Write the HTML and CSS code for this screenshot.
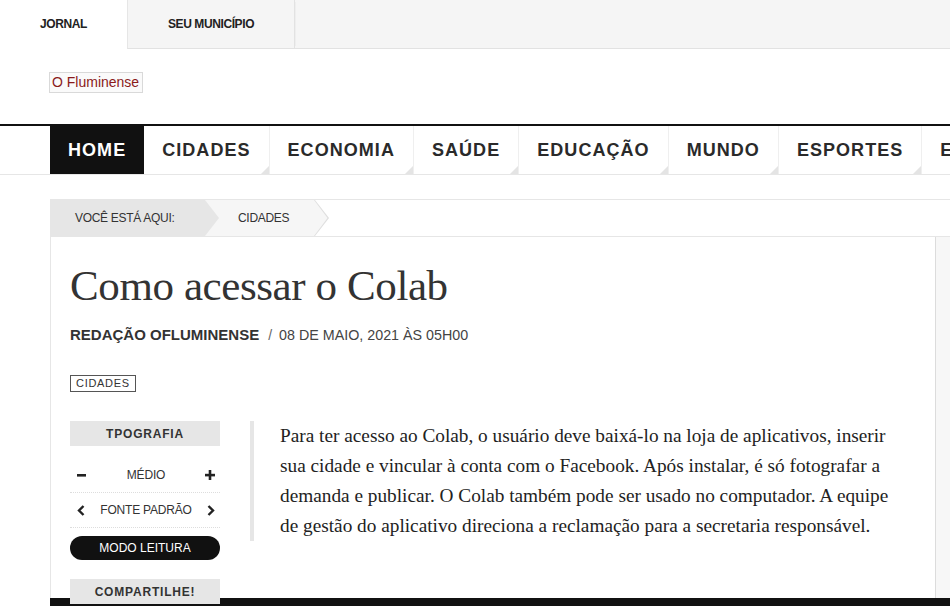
FILE: index.html
```html
<!DOCTYPE html>
<html lang="pt">
<head>
<meta charset="utf-8">
<title>Como acessar o Colab</title>
<link rel="stylesheet" href="styles.css">
</head>
<body>
<div class="topbar">
  <div class="tab tab-active">JORNAL</div>
  <div class="tabs-rest">
    <div class="tab tab-muni">SEU MUNICÍPIO</div>
  </div>
</div>
<div class="logo-row">
  <span class="logo">O Fluminense</span>
</div>
<nav class="nav">
  <a class="nav-item nav-home">HOME</a>
  <a class="nav-item">CIDADES</a>
  <a class="nav-item">ECONOMIA</a>
  <a class="nav-item">SAÚDE</a>
  <a class="nav-item">EDUCAÇÃO</a>
  <a class="nav-item">MUNDO</a>
  <a class="nav-item">ESPORTES</a>
  <a class="nav-item">ENTRETENIMENTO</a>
</nav>
<div class="page">
  <div class="crumbs">
    <div class="crumb crumb-first">VOCÊ ESTÁ AQUI:</div>
    <div class="crumb crumb-second"><span>CIDADES</span></div>
  </div>
  <div class="content-wrap">
    <article class="article">
      <h1 class="title">Como acessar o Colab</h1>
      <div class="byline"><b>REDAÇÃO OFLUMINENSE</b><span class="sep">/</span><span class="date">08 DE MAIO, 2021 ÀS 05H00</span></div>
      <div class="tags"><span class="tag">CIDADES</span></div>
      <div class="body">
        <aside class="tools">
          <div class="tool-head">TPOGRAFIA</div>
          <div class="tool-row tool-row-first">
            <svg class="ico" width="10" height="10" viewBox="0 0 10 10"><rect x="0" y="4" width="9" height="2.6" fill="#222"/></svg>
            <span>MÉDIO</span>
            <svg class="ico" width="10" height="10" viewBox="0 0 10 10"><rect x="0" y="3.8" width="10" height="2.6" fill="#222"/><rect x="3.7" y="0" width="2.6" height="10" fill="#222"/></svg>
          </div>
          <div class="tool-row">
            <svg class="ico" width="8" height="11" viewBox="0 0 8 11"><path d="M6.5 1 L2 5.5 L6.5 10" fill="none" stroke="#222" stroke-width="2.4"/></svg>
            <span>FONTE PADRÃO</span>
            <svg class="ico" width="8" height="11" viewBox="0 0 8 11"><path d="M1.5 1 L6 5.5 L1.5 10" fill="none" stroke="#222" stroke-width="2.4"/></svg>
          </div>
          <div class="read-btn">MODO LEITURA</div>
          <div class="tool-head tool-share">COMPARTILHE!</div>
        </aside>
        <blockquote class="text">
          <p>Para ter acesso ao Colab, o usuário deve baixá-lo na loja de aplicativos, inserir sua cidade e vincular à conta com o Facebook. Após instalar, é só fotografar a demanda e publicar. O Colab também pode ser usado no computador. A equipe de gestão do aplicativo direciona a reclamação para a secretaria responsável.</p>
        </blockquote>
      </div>
    </article>
    <div class="side-col"></div>
  </div>
  <div class="footer-bar"></div>
</div>
</body>
</html>
```
FILE: styles.css
```css
* { box-sizing: border-box; }
html, body { margin: 0; padding: 0; }
body {
  width: 950px;
  height: 606px;
  overflow: hidden;
  background: #fff;
  font-family: "Liberation Sans", Arial, sans-serif;
  color: #222;
}

.topbar {
  display: flex;
  height: 49px;
}
.tab {
  font-size: 12px;
  font-weight: bold;
  letter-spacing: -0.4px;
  color: #222;
  display: flex;
  align-items: center;
  justify-content: center;
  height: 48px;
}
.tab-active {
  width: 127px;
  background: #fff;
}
.tabs-rest {
  flex: 1;
  display: flex;
  background: #f5f5f5;
  border-left: 1px solid #e6e6e6;
  border-bottom: 1px solid #e2e2e2;
}
.tab-muni {
  width: 167px;
  border-right: 1px solid #e2e2e2;
  box-shadow: 3px 0 0 -2px #eee;
}

.logo-row {
  padding: 23px 0 0 49px;
  height: 75px;
}
.logo {
  display: inline-block;
  border: 1px solid #d9d9d9;
  background: #fafafa;
  color: #8b1a1a;
  font-size: 14px;
  padding: 1px 3px 2px 2px;
  line-height: 16px;
}

.nav {
  display: flex;
  border-top: 2px solid #111;
  border-bottom: 1px solid #e6e6e6;
  padding-left: 50px;
  height: 51px;
  white-space: nowrap;
}
.nav-item {
  position: relative;
  display: flex;
  align-items: center;
  height: 48px;
  padding: 0 18px 0 18px;
  font-size: 18px;
  font-weight: bold;
  letter-spacing: 1.05px;
  color: #2a2a2a;
  border-right: 1px solid #efefef;
  flex-shrink: 0;
}
.nav-item::after {
  content: "";
  position: absolute;
  right: 0;
  bottom: 0;
  width: 0;
  height: 0;
  border-style: solid;
  border-width: 0 0 8px 8px;
  border-color: transparent transparent #e4e4e4 transparent;
}
.nav-home {
  background: #111;
  color: #fff;
  border-right: none;
}
.nav-home::after { display: none; }

.page {
  margin-top: 24px;
  padding-left: 50px;
}
.crumbs {
  display: flex;
  height: 38px;
  border-top: 1px solid #e6e6e6;
  border-bottom: 1px solid #e6e6e6;
  font-size: 12px;
  letter-spacing: -0.3px;
  color: #333;
}
.crumb {
  display: flex;
  align-items: center;
  height: 36px;
}
.crumb-first {
  width: 169px;
  padding-left: 25px;
  background: #e6e6e6;
  clip-path: polygon(0 0, 155px 0, 169px 50%, 155px 100%, 0 100%);
  position: relative;
  z-index: 2;
}
.crumb-second {
  width: 124px;
  margin-left: -14px;
  padding-left: 33px;
  background: #dedede;
  clip-path: polygon(0 0, 110px 0, 124px 50%, 110px 100%, 0 100%);
  position: relative;
}
.crumb-second::before {
  content: "";
  position: absolute;
  inset: 0;
  background: #f6f6f6;
  clip-path: polygon(0 0, 109px 0, 122.5px 50%, 109px 100%, 0 100%);
}
.crumb-second span { position: relative; }

.content-wrap {
  display: flex;
  height: 361px;
}
.article {
  width: 886px;
  border-left: 1px solid #e6e6e6;
  border-right: 1px solid #dcdcdc;
  padding: 25px 0 0 19px;
}
.side-col {
  flex: 1;
  background: #f7f7f7;
}
.title {
  margin: 0;
  font-family: "Liberation Serif", "Times New Roman", serif;
  font-weight: normal;
  font-size: 43px;
  line-height: 48px;
  color: #333;
  letter-spacing: -0.4px;
}
.byline {
  margin-top: 16px;
  font-size: 14px;
  line-height: 18px;
  color: #444;
}
.byline b {
  font-size: 15px;
  color: #333;
}
.sep {
  margin: 0 7px 0 9px;
  color: #666;
}
.date {
  font-size: 14.3px;
}
.tags {
  margin-top: 31px;
  height: 17px;
  display: flex;
}
.tag {
  display: inline-block;
  border: 1px solid #555;
  font-size: 11px;
  letter-spacing: 0.7px;
  line-height: 15px;
  padding: 0 5px;
  color: #333;
}

.body {
  display: flex;
  margin-top: 29px;
}
.tools {
  width: 150px;
  flex-shrink: 0;
}
.tool-head {
  background: #e6e6e6;
  height: 25px;
  display: flex;
  align-items: center;
  justify-content: center;
  font-size: 12px;
  font-weight: bold;
  letter-spacing: 0.8px;
  color: #333;
}
.tool-row {
  display: flex;
  align-items: center;
  justify-content: space-between;
  height: 35px;
  padding: 0 5px 0 7px;
  border-bottom: 1px dotted #ddd;
  font-size: 12px;
  letter-spacing: -0.2px;
  color: #333;
}
.tool-row-first {
  margin-top: 12px;
}
.read-btn {
  margin-top: 8px;
  height: 24px;
  border-radius: 12px;
  background: #111;
  color: #fff;
  font-size: 12px;
  display: flex;
  align-items: center;
  justify-content: center;
}
.tool-share {
  margin-top: 19px;
}

.text {
  margin: 0 0 0 30px;
  border-left: 4px solid #e6e6e6;
  padding: 0 0 0 26px;
  width: 650px;
  height: 120px;
}
.text p {
  margin: 0;
  width: 618px;
  font-family: "Liberation Serif", "Times New Roman", serif;
  font-size: 19.3px;
  line-height: 30px;
  color: #222;
}

.footer-bar {
  height: 10px;
  background: #111;
}
```
